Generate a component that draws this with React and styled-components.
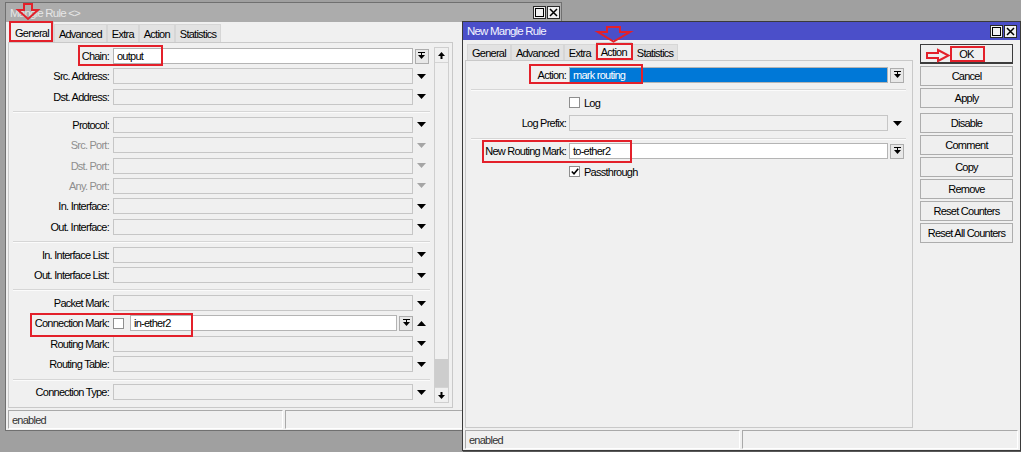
import styled, { createGlobalStyle } from "styled-components";

const GlobalStyle = createGlobalStyle`
  html, body {
    margin: 0;
    padding: 0;
    background: #ffffff;
  }
  body {
    font-family: "Liberation Sans", Arial, sans-serif;
    font-size: 11px;
  }
`;

const RED = "#e3202a";

const Desktop = styled.div`
  position: relative;
  width: 1021px;
  height: 452px;
  background: #a0a0a0;
  overflow: hidden;
  letter-spacing: -0.75px;
  color: #000;
`;

const Window = styled.div`
  position: absolute;
  left: ${p => p.$x}px;
  top: ${p => p.$y}px;
  width: ${p => p.$w}px;
  height: ${p => p.$h}px;
  box-sizing: border-box;
  display: flex;
  flex-direction: column;
  background: #f0f0f0;
  border: 1px solid ${p => (p.$active ? "#3a3a3a" : "#707070")};
  box-shadow: ${p => (p.$active ? "1px 1px 0 #5a5a5a" : "none")};
`;

const TitleBar = styled.div`
  height: ${p => p.$h}px;
  flex: none;
  display: flex;
  align-items: center;
  justify-content: space-between;
  padding: 0 ${p => p.$pr}px 0 4px;
  background: ${p => (p.$active ? "#4b4fc9" : "#acacac")};
  color: ${p => (p.$active ? "#f4f4ff" : "#e6e6e6")};
  font-size: 11.5px;
  letter-spacing: -0.8px;
`;

const WinButtons = styled.div`
  display: flex;
`;

const WinButton = styled.div`
  width: 13px;
  height: 13px;
  box-sizing: border-box;
  border: 1px solid #2a2a2a;
  background: #f2f2f2;
  margin-left: 1px;
  display: flex;
  align-items: center;
  justify-content: center;
`;

const Body = styled.div`
  flex: 1;
  min-height: 0;
  display: flex;
  gap: 7px;
  padding: ${p => p.$pt}px 2px 0;
`;

const Main = styled.div`
  width: ${p => p.$w}px;
  flex: none;
  display: flex;
  flex-direction: column;
`;

const TabRow = styled.div`
  height: ${p => p.$h}px;
  flex: none;
  display: flex;
  align-items: flex-end;
  padding-left: 2px;
`;

const Tab = styled.div`
  height: ${p => (p.$selected ? "100%" : "calc(100% - 2px)")};
  box-sizing: border-box;
  padding: 0 4px;
  display: flex;
  align-items: center;
  background: ${p => (p.$selected ? "#f0f0f0" : "#e2e2e2")};
  border: 1px solid #d6d6d6;
  border-bottom: none;
`;

const Panel = styled.div`
  flex: 1;
  min-height: 0;
  display: flex;
  box-sizing: border-box;
  border: 1px solid #c9c9c9;
  padding: ${p => p.$pad};
`;

const Form = styled.div`
  flex: 1;
  display: flex;
  flex-direction: column;
`;

const Row = styled.div`
  height: 16px;
  flex: none;
  display: flex;
  align-items: center;
  margin-bottom: 4.4px;
`;

const Label = styled.div`
  width: ${p => p.$w}px;
  margin-right: ${p => p.$gap}px;
  flex: none;
  text-align: right;
  white-space: nowrap;
  color: ${p => (p.$dim ? "#8e8e8e" : "#000")};
`;

const Field = styled.div`
  width: ${p => (p.$w ? `${p.$w}px` : "auto")};
  flex: ${p => (p.$w ? "none" : "1")};
  height: 16px;
  box-sizing: border-box;
  padding-left: 3px;
  display: flex;
  align-items: center;
  white-space: nowrap;
  border: 1px solid ${p => (p.$tone === "empty" ? "#c6c6c6" : "#b4b4b4")};
  background: ${p =>
    p.$tone === "white" ? "#ffffff" : p.$tone === "selected" ? "#0078d7" : "transparent"};
  color: ${p => (p.$tone === "selected" ? "#ffffff" : "#000")};
`;

const FieldGroup = styled.div`
  width: ${p => p.$w}px;
  flex: none;
  display: flex;
  align-items: center;
`;

const Slot = styled.div`
  width: ${p => p.$w}px;
  height: 16px;
  flex: none;
  display: flex;
  align-items: center;
  justify-content: center;
`;

const ComboButton = styled.div`
  width: 14px;
  height: 15px;
  flex: none;
  box-sizing: border-box;
  border: 1px solid #adadad;
  background: #e8e8e8;
  margin-left: ${p => p.$ml || 0}px;
  display: flex;
  align-items: center;
  justify-content: center;
`;

const Check = styled.div`
  width: 11px;
  height: 11px;
  flex: none;
  box-sizing: border-box;
  border: 1px solid #8e8e8e;
  background: #ffffff;
  margin-right: ${p => p.$mr}px;
  display: flex;
  align-items: center;
  justify-content: center;
`;

const Separator = styled.div`
  height: 1px;
  flex: none;
  background: #d6d6d6;
  border-bottom: 1px solid #fbfbfb;
  margin: 2px 0 3.6px;
`;

const Scrollbar = styled.div`
  width: 15px;
  flex: none;
  box-sizing: border-box;
  margin: -1px 0 4px 4px;
  border: 1px solid #cfcfcf;
  background: #f0f0f0;
  display: flex;
  flex-direction: column;
`;

const ScrollButton = styled.div`
  height: 14px;
  flex: none;
  display: flex;
  align-items: center;
  justify-content: center;
  border-${p => (p.$down ? "top" : "bottom")}: 1px solid #d4d4d4;
`;

const Track = styled.div`
  flex: 1;
  display: flex;
  flex-direction: column;
  justify-content: flex-end;
`;

const Thumb = styled.div`
  height: 28px;
  background: #cdcdcd;
`;

const Side = styled.div`
  width: 93px;
  flex: none;
  display: flex;
  flex-direction: column;
  padding-top: 2px;
`;

const SideButton = styled.div`
  height: 20px;
  flex: none;
  box-sizing: border-box;
  margin-bottom: ${p => p.$gap}px;
  border: 1px solid ${p => (p.$default ? "#3c3c3c" : "#adadad")};
  border-bottom-width: ${p => (p.$default ? 2 : 1)}px;
  background: #efefef;
  display: flex;
  align-items: center;
  justify-content: center;
  white-space: nowrap;
`;

const StatusBar = styled.div`
  height: 19px;
  flex: none;
  display: flex;
  gap: 2px;
  margin: 2px 2px 1px;
`;

const StatusCell = styled.div`
  width: ${p => (p.$w ? `${p.$w}px` : "auto")};
  flex: ${p => (p.$w ? "none" : "1")};
  box-sizing: border-box;
  border: 1px solid;
  border-color: #a9a9a9 #ffffff #ffffff #a9a9a9;
  padding-left: 3px;
  display: flex;
  align-items: center;
  color: #333;
`;

const Mark = styled.div`
  position: absolute;
  left: ${p => p.$x}px;
  top: ${p => p.$y}px;
  width: ${p => p.$w}px;
  height: ${p => p.$h}px;
  box-sizing: border-box;
  border: 2px solid ${RED};
  pointer-events: none;
`;

const Arrow = styled.svg`
  position: absolute;
  left: ${p => p.$x}px;
  top: ${p => p.$y}px;
  overflow: visible;
  pointer-events: none;
`;

/* --- small drawings --- */

const DownTri = ({ color = "#000" }) => (
  <svg width="9" height="5" viewBox="0 0 9 5">
    <polygon points="0,0 9,0 4.5,5" fill={color} />
  </svg>
);

const UpTri = () => (
  <svg width="9" height="5" viewBox="0 0 9 5">
    <polygon points="0,5 9,5 4.5,0" fill="#000" />
  </svg>
);

const ComboIcon = () => (
  <svg width="7" height="8" viewBox="0 0 7 8">
    <rect x="0" y="0" width="7" height="1" fill="#000" />
    <rect x="3" y="1" width="1" height="2" fill="#000" />
    <polygon points="0,3 7,3 3.5,7" fill="#000" />
  </svg>
);

const ScrollArrow = ({ down }) => (
  <svg width="7" height="7" viewBox="0 0 7 7" style={{ transform: down ? "rotate(180deg)" : "none" }}>
    <polygon points="3.5,0 7,4 0,4" fill="#000" />
    <rect x="2.5" y="4" width="2" height="3" fill="#000" />
  </svg>
);

const MaxIcon = () => (
  <svg width="9" height="9" viewBox="0 0 9 9">
    <rect x="0.5" y="0.5" width="8" height="8" fill="none" stroke="#000" />
  </svg>
);

const CloseIcon = () => (
  <svg width="9" height="9" viewBox="0 0 9 9">
    <path d="M1 1 L8 8 M8 1 L1 8" stroke="#000" strokeWidth="1.5" />
  </svg>
);

const Tick = () => (
  <svg width="8" height="7" viewBox="0 0 8 7">
    <path d="M0.8 3.5 L3 5.8 L7.2 0.8" fill="none" stroke="#000" strokeWidth="1.6" />
  </svg>
);

/* --- data --- */

const generalRows = [
  { label: "Chain", value: "output", kind: "combo" },
  { label: "Src. Address" },
  { label: "Dst. Address" },
  "sep",
  { label: "Protocol" },
  { label: "Src. Port", dim: true },
  { label: "Dst. Port", dim: true },
  { label: "Any. Port", dim: true },
  { label: "In. Interface" },
  { label: "Out. Interface" },
  "sep",
  { label: "In. Interface List" },
  { label: "Out. Interface List" },
  "sep",
  { label: "Packet Mark" },
  { label: "Connection Mark", value: "in-ether2", kind: "negate" },
  { label: "Routing Mark" },
  { label: "Routing Table" },
  "sep",
  { label: "Connection Type" },
];

const tabs = ["General", "Advanced", "Extra", "Action", "Statistics"];

const sideButtons = [
  { text: "OK", def: true, gap: 2 },
  { text: "Cancel", gap: 2 },
  { text: "Apply", gap: 5 },
  { text: "Disable", gap: 2 },
  { text: "Comment", gap: 2 },
  { text: "Copy", gap: 2 },
  { text: "Remove", gap: 2 },
  { text: "Reset Counters", gap: 2 },
  { text: "Reset All Counters", gap: 2 },
];

function GeneralRow({ row }) {
  if (row.kind === "combo") {
    return (
      <Row>
        <Label $w={96} $gap={4}>{row.label}:</Label>
        <Field $w={300} $tone="white">{row.value}</Field>
        <Slot $w={17}>
          <ComboButton>
            <ComboIcon />
          </ComboButton>
        </Slot>
      </Row>
    );
  }
  if (row.kind === "negate") {
    return (
      <Row>
        <Label $w={96} $gap={4}>{row.label}:</Label>
        <FieldGroup $w={300}>
          <Check $mr={6} />
          <Field $tone="white">{row.value}</Field>
          <ComboButton $ml={2}>
            <ComboIcon />
          </ComboButton>
        </FieldGroup>
        <Slot $w={17}>
          <UpTri />
        </Slot>
      </Row>
    );
  }
  return (
    <Row>
      <Label $w={96} $gap={4} $dim={row.dim}>{row.label}:</Label>
      <Field $w={300} $tone="empty" />
      <Slot $w={17}>
        <DownTri color={row.dim ? "#a5a5a5" : "#000"} />
      </Slot>
    </Row>
  );
}

function WindowControls() {
  return (
    <WinButtons>
      <WinButton>
        <MaxIcon />
      </WinButton>
      <WinButton>
        <CloseIcon />
      </WinButton>
    </WinButtons>
  );
}

export default function App() {
  return (
    <>
      <GlobalStyle />
      <Desktop>
        {/* back window: Mangle Rule <> */}
        <Window $x={5} $y={2} $w={557} $h={429}>
          <TitleBar $h={19} $pr={1}>
            <span>Mangle Rule &lt;&gt;</span>
            <WindowControls />
          </TitleBar>
          <Body $pt={0}>
            <Main $w={445}>
              <TabRow $h={20}>
                {tabs.map(t => (
                  <Tab key={t} $selected={t === "General"}>{t}</Tab>
                ))}
              </TabRow>
              <Panel $pad="5px 3px 0 4px">
                <Form>
                  {generalRows.map((r, i) =>
                    r === "sep" ? <Separator key={i} /> : <GeneralRow key={i} row={r} />
                  )}
                </Form>
                <Scrollbar>
                  <ScrollButton>
                    <ScrollArrow />
                  </ScrollButton>
                  <Track>
                    <Thumb />
                  </Track>
                  <ScrollButton $down>
                    <ScrollArrow down />
                  </ScrollButton>
                </Scrollbar>
              </Panel>
            </Main>
          </Body>
          <StatusBar>
            <StatusCell $w={275}>enabled</StatusCell>
            <StatusCell />
          </StatusBar>
        </Window>

        {/* front window: New Mangle Rule */}
        <Window $x={462} $y={21} $w={559} $h={430} $active>
          <TitleBar $h={18} $pr={3} $active>
            <span>New Mangle Rule</span>
            <WindowControls />
          </TitleBar>
          <Body $pt={2}>
            <Main $w={448}>
              <TabRow $h={18}>
                {tabs.map(t => (
                  <Tab key={t} $selected={t === "Action"}>{t}</Tab>
                ))}
              </TabRow>
              <Panel $pad="6px 6px 0 5px">
                <Form>
                  <Row>
                    <Label $w={95} $gap={3}>Action:</Label>
                    <Field $w={319} $tone="selected">mark routing</Field>
                    <Slot $w={18}>
                      <ComboButton>
                        <ComboIcon />
                      </ComboButton>
                    </Slot>
                  </Row>
                  <Separator />
                  <Row>
                    <Label $w={95} $gap={3} />
                    <Check $mr={4} />
                    <span>Log</span>
                  </Row>
                  <Row>
                    <Label $w={95} $gap={3}>Log Prefix:</Label>
                    <Field $w={319} $tone="empty" />
                    <Slot $w={18}>
                      <DownTri />
                    </Slot>
                  </Row>
                  <Separator />
                  <Row>
                    <Label $w={95} $gap={3}>New Routing Mark:</Label>
                    <Field $w={319} $tone="white">to-ether2</Field>
                    <Slot $w={18}>
                      <ComboButton>
                        <ComboIcon />
                      </ComboButton>
                    </Slot>
                  </Row>
                  <Row>
                    <Label $w={95} $gap={3} />
                    <Check $mr={4}>
                      <Tick />
                    </Check>
                    <span>Passthrough</span>
                  </Row>
                </Form>
              </Panel>
            </Main>
            <Side>
              {sideButtons.map(b => (
                <SideButton key={b.text} $default={b.def} $gap={b.gap}>
                  {b.text}
                </SideButton>
              ))}
            </Side>
          </Body>
          <StatusBar>
            <StatusCell $w={275}>enabled</StatusCell>
            <StatusCell />
          </StatusBar>
        </Window>

        {/* red annotations */}
        <Mark $x={9} $y={21} $w={44} $h={21} />
        <Mark $x={78} $y={45} $w={85} $h={21} />
        <Mark $x={30} $y={313} $w={163} $h={24} />
        <Mark $x={596} $y={43} $w={37} $h={17} />
        <Mark $x={529} $y={64} $w={114} $h={20} />
        <Mark $x={482} $y={140} $w={150} $h={23} />
        <Mark $x={950} $y={46} $w={35} $h={16} />

        <Arrow $x={17} $y={3} width="22" height="17" viewBox="0 0 22 17">
          <path d="M7 1 H15 V7 H21 L11 16 L1 7 H7 Z" fill="none" stroke={RED} strokeWidth="2" />
        </Arrow>
        <Arrow $x={597} $y={26} width="34" height="17" viewBox="0 0 34 17">
          <path d="M10 1 H23 V6 H33 L16.5 15.5 L1 6 H10 Z" fill="none" stroke={RED} strokeWidth="2" />
        </Arrow>
        <Arrow $x={926} $y={49} width="24" height="13" viewBox="0 0 24 13">
          <path d="M1 4 H12 V1 L22.5 6.5 L12 12 V9 H1 Z" fill="none" stroke={RED} strokeWidth="2" />
        </Arrow>
      </Desktop>
    </>
  );
}
